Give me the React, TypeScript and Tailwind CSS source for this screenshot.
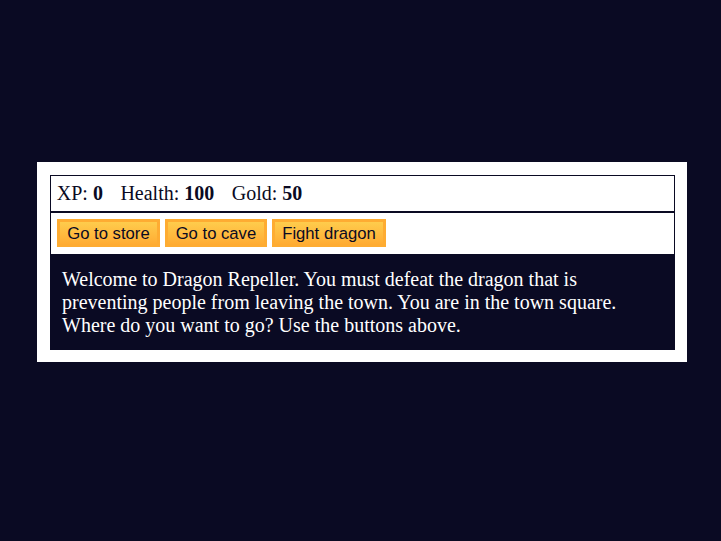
import React from "react";

export default function App() {
  const btn =
    "cursor-pointer text-[#0a0a23] bg-[#feac32] bg-gradient-to-b from-[#fecc4c] to-[#ffac33] border-[3px] border-solid border-[#feac32] px-[7.5px] py-[1.25px] text-[16.67px] leading-[19.5px] font-['Liberation_Sans',Arial,sans-serif]";
  return (
    <div className="min-h-[541px] w-full bg-[#0a0a23] pt-[162px] font-['Liberation_Serif','Times_New_Roman',serif]">
      <div className="ml-[37px] w-[650px] bg-white p-[12.5px] text-white">
        <div className="border-[1.25px] border-solid border-[#0a0a23] p-[6.25px] text-[20px] leading-[23px] text-[#0a0a23]">
          <span className="pr-[12.5px]">
            XP: <strong>0</strong>
          </span>{" "}
          <span className="pr-[12.5px]">
            Health: <strong>100</strong>
          </span>{" "}
          <span className="pr-[12.5px]">
            Gold: <strong>50</strong>
          </span>
        </div>
        <div className="flex gap-[5px] border-[1.25px] border-solid border-[#0a0a23] p-[6.25px] text-[#0a0a23]">
          <button className={btn}>Go to store</button>
          <button className={btn}>Go to cave</button>
          <button className={btn}>Fight dragon</button>
        </div>
        <div className="bg-[#0a0a23] px-[12.5px] pt-[13px] pb-[13px] text-[20px] leading-[23px] text-white">
          Welcome to Dragon Repeller. You must defeat the dragon that is preventing people from leaving the
          town. You are in the town square. Where do you want to go? Use the buttons above.
        </div>
      </div>
    </div>
  );
}
